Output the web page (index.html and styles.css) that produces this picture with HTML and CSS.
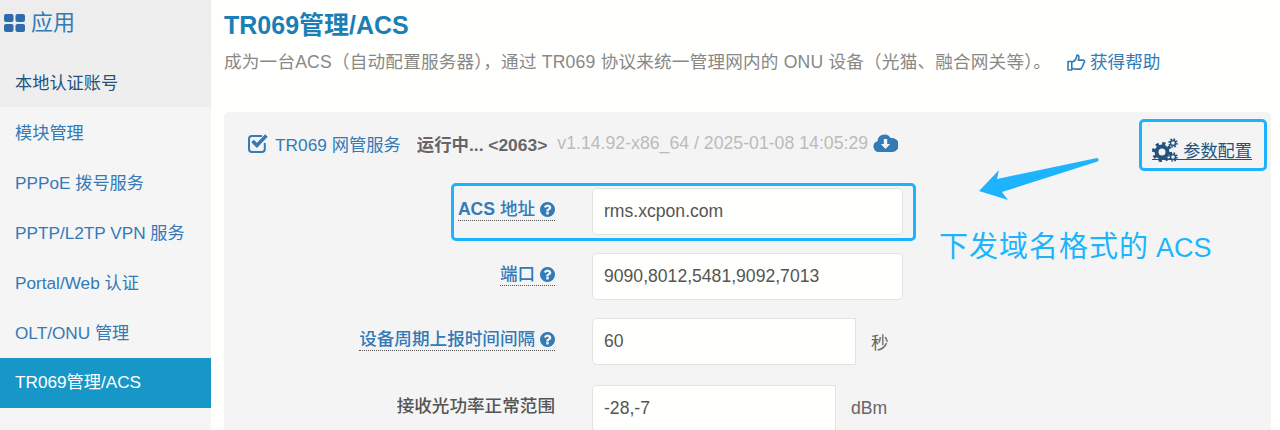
FILE: index.html
```html
<!DOCTYPE html>
<html lang="zh-CN">
<head>
<meta charset="utf-8">
<title>TR069管理/ACS</title>
<link rel="stylesheet" href="styles.css">
</head>
<body>
<svg class="defs" width="0" height="0" aria-hidden="true">
  <symbol id="q" viewBox="0 128 1536 1536"><path d="M896 1376v-192q0-14-9-23t-23-9H672q-14 0-23 9t-9 23v192q0 14 9 23t23 9h192q14 0 23-9t9-23zm256-672q0-88-55.500-163T958 425t-170-41q-243 0-371 213-15 24 8 42l132 100q7 6 19 6 16 0 25-12 53-68 86-92 34-24 86-24 48 0 85.500 26t37.500 59q0 38-20 61t-68 45q-63 28-115.500 86.500T640 1020v36q0 14 9 23t23 9h192q14 0 23-9t9-23q0-19 21.500-49.500T972 957q32-18 49-28.500t46-35 44.500-48 28-60.500 12.500-81zm384 192q0 209-103 385.500T1153.500 1561 768 1664t-385.500-103T103 1281.500 0 896t103-385.500T382.500 231 768 128t385.500 103T1433 510.500 1536 896z" fill="currentColor"/></symbol>
</svg>
<div class="page">
  <aside class="side">
    <h2 class="side-head">
      <svg class="grid-ico" viewBox="0 0 21 18"><rect x="0" y="0" width="9.500" height="8" rx="2"/><rect x="11.500" y="0" width="9.500" height="8" rx="2"/><rect x="0" y="10" width="9.500" height="8" rx="2"/><rect x="11.500" y="10" width="9.500" height="8" rx="2"/></svg>
      <span>应用</span>
    </h2>
    <nav class="menu">
      <a class="item hover">本地认证账号</a>
      <a class="item">模块管理</a>
      <a class="item">PPPoE 拨号服务</a>
      <a class="item">PPTP/L2TP VPN 服务</a>
      <a class="item">Portal/Web 认证</a>
      <a class="item">OLT/ONU 管理</a>
      <a class="item active">TR069管理/ACS</a>
    </nav>
  </aside>
  <main class="main">
    <h1 class="title">TR069管理/ACS</h1>
    <p class="desc">成为一台ACS（自动配置服务器），通过 TR069 协议来统一管理网内的 ONU 设备（光猫、融合网关等）。<a class="help"><svg class="thumb" viewBox="0 0 20 18"><path d="M1 8h4v9H1zM5 8.500c2 0 3.500-1.500 4.500-3.500.6-1.300.6-3 1-4 1.600 0 2.300 1.400 2 3l-.6 2.500h5c1.200 0 1.800 1 1.600 2-.2.800-.7 1.200-1.200 1.500.3.900 0 1.700-.8 2.200.2 1-.2 1.800-1 2.200 0 1-.7 1.600-1.700 1.600H9c-1.500 0-2.500-.8-4-.8" fill="none" stroke="currentColor" stroke-width="1.700" stroke-linejoin="round"/></svg>获得帮助</a></p>
    <section class="panel">
      <div class="service">
        <svg class="check" viewBox="0 1 20 20"><path d="M16.800 11v6a3 3 0 0 1-3 3H4a3 3 0 0 1-3-3V7a3 3 0 0 1 3-3h10" fill="none" stroke="currentColor" stroke-width="2"/><path d="M4.600 9l4.300 4.500 9.500-10" fill="none" stroke="currentColor" stroke-width="3.600"/></svg>
        <span class="svc-name">TR069 网管服务</span>
        <b class="svc-state">运行中... &lt;2063&gt;</b>
        <span class="svc-ver">v1.14.92-x86_64 / 2025-01-08 14:05:29</span>
        <svg class="cloud" viewBox="0 0 25 18"><path d="M6 18a5.500 5.500 0 0 1-1.500-10.800A7 7 0 0 1 17.500 4 4.800 4.800 0 0 1 20 18z" fill="currentColor"/><path d="M10.800 5h3.400v5h3l-4.700 5-4.700-5h3z" fill="#f4f4f5"/></svg>
        <a class="params">
          <svg class="cogs" viewBox="0 0 26 24">
            <circle cx="10" cy="14" r="5.500" fill="none" stroke="currentColor" stroke-width="4"/>
            <circle cx="10" cy="14" r="8.500" fill="none" stroke="currentColor" stroke-width="3.200" stroke-dasharray="3.200 3.470"/>
            <circle cx="21" cy="5" r="2.500" fill="none" stroke="currentColor" stroke-width="1.500"/>
            <circle cx="21" cy="5" r="4" fill="none" stroke="currentColor" stroke-width="1.500" stroke-dasharray="1.700 1.440"/>
            <circle cx="21" cy="19" r="2.500" fill="none" stroke="currentColor" stroke-width="1.500"/>
            <circle cx="21" cy="19" r="4" fill="none" stroke="currentColor" stroke-width="1.500" stroke-dasharray="1.700 1.440"/>
          </svg>
          <span class="params-text">参数配置</span>
        </a>
      </div>
      <div class="form">
        <div class="row">
          <label class="lab"><span class="tip"><b>ACS</b> 地址 <svg class="q"><use href="#q"/></svg></span></label>
          <input class="inp w311" value="rms.xcpon.com">
        </div>
        <div class="row">
          <label class="lab"><span class="tip">端口 <svg class="q"><use href="#q"/></svg></span></label>
          <input class="inp w311" value="9090,8012,5481,9092,7013">
        </div>
        <div class="row">
          <label class="lab"><span class="tip">设备周期上报时间间隔 <svg class="q"><use href="#q"/></svg></span></label>
          <input class="inp w264" value="60"><span class="unit">秒</span>
        </div>
        <div class="row last">
          <label class="lab plain">接收光功率正常范围</label>
          <input class="inp w244" value="-28,-7"><span class="unit">dBm</span>
        </div>
      </div>
      <div class="mark mark-acs"></div>
      <div class="mark mark-params"></div>
      <svg class="arrow" viewBox="0 0 124 46"><path d="M0 33L20 12L18 21L118 0C120 0 120 3 118.500 3.500L23 34L29 42Z" fill="#1eb4fd"/></svg>
      <div class="note"><span class="note-cjk">下发域名格式的</span>ACS</div>
    </section>
  </main>
</div>
</body>
</html>
```
FILE: styles.css
```css
html, body { margin: 0; padding: 0; height: 430px; overflow: hidden; background: #fffffd; }
body { font-family: "Liberation Sans", "Noto Sans CJK SC", sans-serif; font-size: 17.200px; color: #555; }
.defs { position: absolute; }
.page { display: flex; height: 430px; }
.side { width: 211px; flex: none; background: #f5f5f5; height: 430px; }
.side-head { margin: 0; height: 57px; background: #ededed; display: flex; align-items: flex-start; padding: 11px 0 0 4px; box-sizing: border-box; font-weight: 400; font-size: 22px; color: #337ab7; gap: 6px; line-height: 24px; }
.grid-ico { width: 21px; height: 18px; margin-top: 3px; fill: #2f6cad; }
.menu { display: flex; flex-direction: column; }
.item { height: 50px; line-height: 50px; padding: 1px 0 0 15px; color: #337ab7; box-sizing: border-box; }
.item.hover { background: #eee; color: #23527c; }
.item.active { background: #1797c8; color: #fff; height: 50px; margin-top: 1px; line-height: 49px; padding-top: 0; }
.main { flex: 1; padding-left: 13px; padding-right: 9px; min-width: 0; }
.title { margin: 12px 0 0 0; font-size: 25px; line-height: 27px; font-weight: 700; color: #1b7fb5; }
.desc { margin: 12px 0 0; font-size: 17.600px; letter-spacing: .2px; line-height: 22px; color: #888; white-space: nowrap; }
.help { color: #337ab7; margin-left: 16px; letter-spacing: 0; }
.thumb { width: 19px; height: 17px; vertical-align: -3px; margin-right: 4px; }
.panel { position: relative; margin-top: 39px; height: 330px; background: #f4f4f5; border-radius: 5px; }
.service { display: flex; align-items: center; height: 62px; padding: 0 19px 0 24px; font-size: 17.700px; white-space: nowrap; }
.check { width: 20px; height: 20px; color: #337ab7; margin-right: 7px; }
.svc-name { color: #337ab7; margin-right: 16px; font-size: 17.300px; }
.svc-state { color: #666; margin-right: 10px; font-size: 17.400px; }
.svc-ver { color: #bbb; margin-right: 5px; }
.cloud { width: 25px; height: 18px; color: #337ab7; }
.params { margin-left: auto; color: #23527c; display: flex; align-items: center; margin-top: 14px; border-bottom: 1px solid #23527c; height: 18px; }
.cogs { width: 26px; height: 24px; flex: none; }
.params-text { margin-left: 5px; font-size: 17.200px; }
.form { display: flex; flex-direction: column; gap: 18px; margin-top: 14px; }
.row { display: flex; align-items: center; height: 47px; }
.row.last { margin-top: 2px; }
.lab { width: 331px; flex: none; text-align: right; margin-right: 37px; font-size: 17.600px; font-weight: 500; color: #555; margin-top: -8px; }
.tip { color: #337ab7; border-bottom: 1px dotted #555; padding-bottom: 1px; }
.q { width: 15px; height: 15px; color: #337ab7; vertical-align: -2px; }
.inp { box-sizing: border-box; height: 47px; padding: 0 11px; font: inherit; font-size: 17.600px; color: #555; background: #fffffd; border: 1px solid #e2e2e2; border-radius: 5px; outline: none; }
.w311 { width: 311px; }
.w264 { width: 264px; border-radius: 5px 0 0 5px; }
.w244 { width: 244px; border-radius: 5px 0 0 5px; }
.unit { margin-left: 15px; font-size: 17.600px; color: #666; }
.mark { position: absolute; box-sizing: border-box; border: 3px solid #1eb4fd; border-radius: 5px; }
.mark-acs { left: 227px; top: 71px; width: 465px; height: 58px; }
.mark-params { left: 915px; top: 7px; width: 128px; height: 52px; }
.arrow { position: absolute; left: 755px; top: 46px; width: 124px; height: 46px; }
.note { position: absolute; left: 715px; top: 116px; font-size: 27px; line-height: 38px; color: #1eb4fd; white-space: nowrap; }
.note-cjk { font-size: 29px; letter-spacing: 1px; margin-right: 7px; }
```
